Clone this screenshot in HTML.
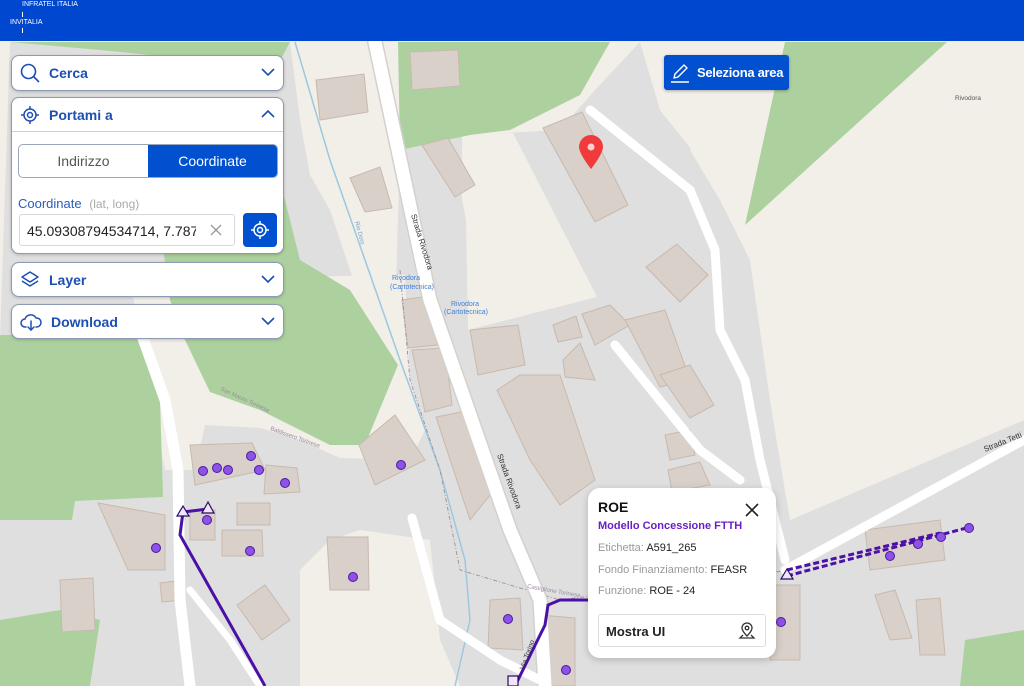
<!DOCTYPE html>
<html><head><meta charset="utf-8">
<style>
*{box-sizing:border-box;margin:0;padding:0}
body{width:1024px;height:686px;overflow:hidden;position:relative;font-family:"Liberation Sans",sans-serif;background:#f2efe9}
#hdr{position:absolute;left:0;top:0;width:1024px;height:41px;background:#0047d0;color:#fff;font-size:7px}
#map{position:absolute;left:0;top:0}
.pan{position:absolute;left:11px;width:273px;background:#fff;border:1px solid #8c9ab3;border-radius:8px;box-shadow:0 1px 3px rgba(0,0,0,.2)}
.ph{height:34px;display:flex;align-items:center;padding-left:8px;color:#1d4fb3;font-weight:bold;font-size:14px}
.ph svg{margin-right:9px}
.chev{position:absolute;right:8px;top:11px}
.btnb{background:#0050d0;color:#fff}
</style></head><body>
<svg id="map" width="1024" height="686" viewBox="0 0 1024 686">
<rect width="1024" height="686" fill="#f2efe9"/>
<polygon points="10,42 290,42 300,120 310,175 330,210 350,270 360,300 395,320 400,150 470,135 560,130 595,90 640,42 660,110 700,160 750,260 770,400 790,520 1024,420 1024,686 0,686 0,340" fill="#e0dfdf"/>
<polygon points="462,135 513,133 597,297 468,330 466,220 462,200" fill="#f2efe9"/>
<polygon points="785,42 1024,42 1024,420 790,520 770,400 750,260 720,200 690,150" fill="#f2efe9"/>
<polygon points="130,280 405,275 410,380 425,430 410,460 340,458 300,440 260,428 205,425 195,470 165,470" fill="#f2efe9"/>
<polygon points="330,540 360,530 430,540 440,640 460,686 300,686 300,570" fill="#f2efe9"/>
<!-- greens -->
<polygon points="398,42 610,42 580,95 510,130 470,135 400,150" fill="#add19e"/>
<polygon points="785,42 947,42 745,225" fill="#add19e"/>
<polygon points="965,640 1024,630 1024,686 960,686" fill="#add19e"/>
<polygon points="0,335 145,335 160,400 163,497 75,501 72,520 0,520" fill="#add19e"/>
<polygon points="160,225 280,180 300,260 350,290 398,365 365,445 330,445 260,410 210,392 185,340 170,300" fill="#add19e"/>
<polygon points="0,620 60,610 100,620 90,686 0,686" fill="#add19e"/>
<polygon points="10,42 290,42 270,80 250,60 200,60 100,50" fill="#add19e"/>
<g fill="#d9d0c9" stroke="#c7b9ae" stroke-width="1">
<polygon points="410,52 458,50 460,86 412,90"/>
<polygon points="316,80 364,74 368,112 320,120"/>
<polygon points="422,145 448,138 475,185 455,197"/>
<polygon points="350,178 380,167 392,208 365,212"/>
<polygon points="543,128 582,112 628,205 595,222"/>
<polygon points="646,267 677,244 708,275 680,302"/>
<polygon points="402,300 430,296 437,345 408,348"/>
<polygon points="412,350 445,348 452,405 425,412"/>
<polygon points="470,330 518,325 525,365 478,375"/>
<polygon points="553,325 576,316 582,337 558,342"/>
<polygon points="582,314 610,305 630,325 595,345"/>
<polygon points="563,360 580,343 595,380 565,377"/>
<polygon points="625,320 665,310 690,380 660,387"/>
<polygon points="660,375 690,365 714,405 690,418"/>
<polygon points="497,390 520,375 560,375 595,480 560,505 530,460"/>
<polygon points="436,417 462,412 490,495 470,520"/>
<polygon points="359,445 395,415 425,460 375,485"/>
<polygon points="190,445 252,443 265,470 195,485"/>
<polygon points="266,465 297,468 300,492 264,494"/>
<polygon points="237,503 270,503 270,525 237,525"/>
<polygon points="222,530 262,530 263,556 222,556"/>
<polygon points="190,510 215,510 215,540 190,540"/>
<polygon points="98,503 165,515 165,570 128,570"/>
<polygon points="60,580 93,578 95,630 62,632"/>
<polygon points="160,583 183,580 184,600 162,602"/>
<polygon points="237,605 265,585 290,620 262,640"/>
<polygon points="327,537 368,537 369,590 330,590"/>
<polygon points="490,600 520,598 523,650 488,648"/>
<polygon points="540,615 575,618 575,686 540,686"/>
<polygon points="665,435 690,430 695,455 670,460"/>
<polygon points="668,470 700,462 710,485 672,492"/>
<polygon points="770,585 800,585 800,660 770,660"/>
<polygon points="875,595 895,590 912,638 890,640"/>
<polygon points="916,600 940,598 945,655 920,655"/>
<polygon points="865,530 940,520 945,560 870,570"/>
</g>
<polyline points="295,42 330,160 400,360 440,470 465,560 470,620 455,686" fill="none" stroke="#9cc8de" stroke-width="1.5"/>
<polyline points="400,270 410,380 440,470 460,570 560,600 790,570" fill="none" stroke="#a593a0" stroke-width="1" stroke-dasharray="4,2,1,2"/>
<g fill="none" stroke="#fff" stroke-linecap="round" stroke-linejoin="round">
<polyline points="375,42 430,300 510,530 540,600 545,686" stroke="#d4d1cd" stroke-width="16"/>
<polyline points="375,42 430,300 510,530 540,600 545,686" stroke-width="13"/>
<polyline points="590,110 690,190 715,250 720,330 745,380 760,460 785,560" stroke-width="9"/>
<polyline points="615,345 700,450 740,480" stroke-width="9"/>
<polyline points="785,570 1024,440" stroke-width="9"/>
<polyline points="140,330 165,400 178,470 180,600 190,686" stroke-width="11"/>
<polyline points="412,518 440,620 500,660 540,680" stroke-width="9"/>
<polyline points="190,590 230,640 260,686" stroke-width="7"/>
</g>
<g stroke="#4a10a8" stroke-width="3" fill="none">
<polyline points="183,512 180,535 265,686"/>
<polyline points="183,512 208,509"/>
<polyline points="515,686 545,625 548,605 560,600 590,600"/>
<polyline points="787,576 970,527" stroke-dasharray="6,3"/>
<polyline points="787,570 940,533" stroke-dasharray="6,3"/>
</g>
<g fill="#efe6fb" stroke="#2a0a60" stroke-width="1.2">
<polygon points="183,506 177,516 189,516"/><polygon points="208,502 202,513 214,513"/>
<polygon points="787,569 781,579 793,579"/>
<rect x="508" y="676" width="10" height="10"/>
</g>
<g fill="#8e52e6" stroke="#4a1aa0" stroke-width="1">
<circle cx="203" cy="471" r="4.5"/><circle cx="217" cy="468" r="4.5"/><circle cx="228" cy="470" r="4.5"/>
<circle cx="251" cy="456" r="4.5"/><circle cx="259" cy="470" r="4.5"/><circle cx="285" cy="483" r="4.5"/>
<circle cx="207" cy="520" r="4.5"/><circle cx="250" cy="551" r="4.5"/><circle cx="156" cy="548" r="4.5"/>
<circle cx="401" cy="465" r="4.5"/><circle cx="353" cy="577" r="4.5"/><circle cx="508" cy="619" r="4.5"/>
<circle cx="566" cy="670" r="4.5"/><circle cx="781" cy="622" r="4.5"/><circle cx="890" cy="556" r="4.5"/>
<circle cx="918" cy="544" r="4.5"/><circle cx="941" cy="537" r="4.5"/><circle cx="969" cy="528" r="4.5"/>
</g>
<g font-family="Liberation Sans" font-size="7">
<text x="411" y="215" transform="rotate(73 411 215)" font-size="8" fill="#333">Strada Rivodora</text>
<text x="497" y="455" transform="rotate(70 497 455)" font-size="8" fill="#333">Strada Rivodora</text>
<text x="985" y="452" transform="rotate(-22 985 452)" font-size="8" fill="#333">Strada Tetti</text>
<text x="524" y="670" transform="rotate(-70 524 670)" font-size="7" fill="#333">Via Torino</text>
<text x="392" y="280" fill="#3f7fd6">Rivodora</text><text x="390" y="289" fill="#3f7fd6">(Cartotecnica)</text>
<text x="451" y="306" fill="#3f7fd6">Rivodora</text><text x="444" y="314" fill="#3f7fd6">(Cartotecnica)</text>
<text x="955" y="100" fill="#555" font-size="6.5">Rivodora</text>
<text x="220" y="390" transform="rotate(25 220 390)" fill="#9a8aa0" font-size="6">San Mauro Torinese</text>
<text x="270" y="430" transform="rotate(20 270 430)" fill="#9a8aa0" font-size="6">Baldissero Torinese</text>
<text x="527" y="588" transform="rotate(10 527 588)" fill="#9a8aa0" font-size="6">Castiglione Torinese</text>
<text x="355" y="222" transform="rotate(75 355 222)" fill="#6aa0c8" font-size="6">Rio Doro</text>
</g>
<path d="M591 135 a12 12 0 0 1 12 12 c0 7 -12 22 -12 22 c0 0 -12 -15 -12 -22 a12 12 0 0 1 12 -12z" fill="#ef3b3b"/>
<circle cx="591" cy="147" r="3.5" fill="#f7d0d0"/>
</svg>

<div id="hdr">
<div style="position:absolute;left:22px;top:1px">INFRATEL ITALIA</div>
<div style="position:absolute;left:22px;top:12px;width:1px;height:5px;background:#fff"></div>
<div style="position:absolute;left:10px;top:19px">INVITALIA</div>
<div style="position:absolute;left:22px;top:28px;width:1px;height:5px;background:#fff"></div>
</div>

<div class="pan" style="top:55px;height:36px">
<div class="ph"><svg width="20" height="20" viewBox="0 0 20 20" fill="none" stroke="#1d4fb3" stroke-width="1.6"><circle cx="8.5" cy="8.5" r="7"/><line x1="13.5" y1="13.5" x2="19" y2="19"/></svg>Cerca</div>
<svg class="chev" width="14" height="10" viewBox="0 0 14 10"><polyline points="1,2 7,8 13,2" fill="none" stroke="#1d4fb3" stroke-width="1.6"/></svg>
</div>
<div class="pan" style="top:97px;height:157px">
<div class="ph" style="border-bottom:1px solid #c9d1de"><svg width="20" height="20" viewBox="0 0 20 20" fill="none" stroke="#1d4fb3" stroke-width="1.5"><circle cx="10" cy="10" r="6"/><circle cx="10" cy="10" r="2.5"/><line x1="10" y1="1" x2="10" y2="4"/><line x1="10" y1="16" x2="10" y2="19"/><line x1="1" y1="10" x2="4" y2="10"/><line x1="16" y1="10" x2="19" y2="10"/></svg>Portami a</div>
<svg class="chev" width="14" height="10" viewBox="0 0 14 10"><polyline points="1,8 7,2 13,8" fill="none" stroke="#1d4fb3" stroke-width="1.6"/></svg>
<div style="position:absolute;left:6px;top:46px;width:260px;height:34px;border:1px solid #9aa6bb;border-radius:5px;overflow:hidden;display:flex;font-size:14px">
<div style="width:129px;display:flex;align-items:center;justify-content:center;color:#555">Indirizzo</div>
<div class="btnb" style="flex:1;display:flex;align-items:center;justify-content:center">Coordinate</div>
</div>
<div style="position:absolute;left:6px;top:98px;font-size:13px;color:#2b5cb8">Coordinate <span style="color:#aaa;font-size:12px;margin-left:4px">(lat, long)</span></div>
<div style="position:absolute;left:7px;top:116px;width:216px;height:32px;border:1px solid #d4d8df;border-radius:3px;font-size:14px;color:#222;padding:8px 0 0 7px;overflow:hidden;white-space:nowrap">45.09308794534714, 7.7876<span style="position:absolute;right:0;top:0;width:38px;height:30px;background:#fff"></span>
<svg style="position:absolute;right:12px;top:9px" width="12" height="12" viewBox="0 0 12 12"><path d="M1 1L11 11M11 1L1 11" stroke="#999" stroke-width="1.3"/></svg></div>
<div class="btnb" style="position:absolute;left:231px;top:115px;width:34px;height:34px;border-radius:4px">
<svg style="position:absolute;left:7px;top:7px" width="20" height="20" viewBox="0 0 20 20" fill="none" stroke="#fff" stroke-width="1.5"><circle cx="10" cy="10" r="6"/><circle cx="10" cy="10" r="2.5"/><line x1="10" y1="1" x2="10" y2="4"/><line x1="10" y1="16" x2="10" y2="19"/><line x1="1" y1="10" x2="4" y2="10"/><line x1="16" y1="10" x2="19" y2="10"/></svg></div>
</div>
<div class="pan" style="top:262px;height:35px">
<div class="ph"><svg width="20" height="20" viewBox="0 0 20 20" fill="none" stroke="#1d4fb3" stroke-width="1.5" stroke-linejoin="round"><polygon points="10,2 18,7 10,12 2,7"/><polyline points="2,11 10,16 18,11"/></svg>Layer</div>
<svg class="chev" width="14" height="10" viewBox="0 0 14 10"><polyline points="1,2 7,8 13,2" fill="none" stroke="#1d4fb3" stroke-width="1.6"/></svg>
</div>
<div class="pan" style="top:304px;height:35px">
<div class="ph"><svg width="22" height="20" viewBox="0 0 22 20" fill="none" stroke="#1d4fb3" stroke-width="1.5" stroke-linecap="round"><path d="M6 15H5a4 4 0 0 1 0-8 6 6 0 0 1 11-1 4.5 4.5 0 0 1 1 9h-1"/><line x1="11" y1="9" x2="11" y2="18"/><polyline points="8,15 11,18 14,15"/></svg>Download</div>
<svg class="chev" width="14" height="10" viewBox="0 0 14 10"><polyline points="1,2 7,8 13,2" fill="none" stroke="#1d4fb3" stroke-width="1.6"/></svg>
</div>

<div class="btnb" style="position:absolute;left:664px;top:55px;width:125px;height:35px;border-radius:3px;font-weight:bold;font-size:13px;letter-spacing:-0.3px;white-space:nowrap;display:flex;align-items:center;box-shadow:0 1px 3px rgba(0,0,0,.3)">
<svg style="margin:0 6px 0 5px;flex:none" width="22" height="22" viewBox="0 0 22 22" fill="none" stroke="#fff" stroke-width="1.4" stroke-linejoin="round"><path d="M5 16l1-4 9-9 3 3-9 9z"/><line x1="2" y1="20" x2="20" y2="20"/></svg>Seleziona area</div>

<div style="position:absolute;left:588px;top:488px;width:188px;height:170px;background:#fff;border-radius:12px;box-shadow:0 2px 8px rgba(0,0,0,.2)">
<div style="position:absolute;left:10px;top:11px;font-weight:bold;font-size:14px;color:#111">ROE</div>
<svg style="position:absolute;left:157px;top:15px" width="14" height="14" viewBox="0 0 14 14"><path d="M1 1L13 13M13 1L1 13" stroke="#222" stroke-width="1.6"/></svg>
<div style="position:absolute;left:10px;top:32px;font-weight:bold;font-size:11px;color:#6a1fc4">Modello Concessione FTTH</div>
<div style="position:absolute;left:10px;top:54px;font-size:11px;color:#999">Etichetta: <span style="color:#222">A591_265</span></div>
<div style="position:absolute;left:10px;top:76px;font-size:11px;color:#999">Fondo Finanziamento: <span style="color:#222">FEASR</span></div>
<div style="position:absolute;left:10px;top:97px;font-size:11px;color:#999">Funzione: <span style="color:#222">ROE - 24</span></div>
<div style="position:absolute;left:10px;top:126px;width:168px;height:33px;border:1px solid #ddd;border-radius:3px">
<div style="position:absolute;left:7px;top:9px;font-size:13px;font-weight:bold;color:#222">Mostra UI</div>
<svg style="position:absolute;right:9px;top:7px" width="18" height="18" viewBox="0 0 18 18" fill="none" stroke="#333" stroke-width="1.3"><path d="M9 14s-5-5-5-8a5 5 0 0 1 10 0c0 3-5 8-5 8z"/><circle cx="9" cy="6" r="1.8"/><path d="M5 13l-3 3h14l-3-3"/></svg>
</div>
</div>
</body></html>
